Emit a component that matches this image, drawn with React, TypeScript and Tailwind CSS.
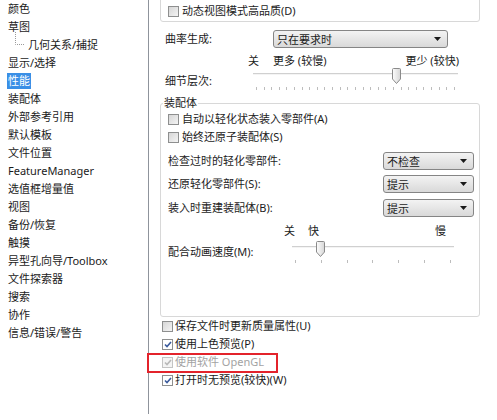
import React from 'react';

const navItems = [
  '颜色', '草图', '几何关系/捕捉', '显示/选择', '性能', '装配体', '外部参考引用', '默认模板', '文件位置',
  'FeatureManager', '选值框增量值', '视图', '备份/恢复', '触摸', '异型孔向导/Toolbox', '文件探索器', '搜索', '协作', '信息/错误/警告',
];

function Box({ checked = false, disabled = false }: { checked?: boolean; disabled?: boolean }) {
  return (
    <span className={`w-[11px] h-[11px] shrink-0 flex items-center justify-center border ${disabled ? 'border-[#c4c4c4] bg-[#f4f4f4]' : checked ? 'border-[#8e8f8f] bg-white' : 'border-[#8e8f8f] bg-gradient-to-br from-[#d6d6d6] to-[#f4f4f4]'}`}>
      {checked && (
        <svg width="8" height="7" viewBox="0 0 8 7">
          <path d="M1 3.5 L3 5.5 L7 1" fill="none" stroke={disabled ? '#b8b8b8' : '#3a5a9c'} strokeWidth="1.6" />
        </svg>
      )}
    </span>
  );
}

function Select({ value, className = '' }: { value: string; className?: string }) {
  return (
    <div className={`h-[18px] border border-[#858585] rounded-[3px] bg-gradient-to-b from-[#f3f3f3] to-[#d9d9d9] flex items-center justify-between pl-[3px] pr-[6px] ${className}`}>
      <span className="leading-none">{value}</span>
      <svg width="7" height="4" viewBox="0 0 7 4"><path d="M0 0h7L3.5 4z" fill="#1a1a1a" /></svg>
    </div>
  );
}

function Thumb() {
  return (
    <svg width="9" height="16" viewBox="0 0 9 16">
      <defs>
        <linearGradient id="tg" x1="0" y1="0" x2="1" y2="0">
          <stop offset="0" stopColor="#fdfdfd" />
          <stop offset="1" stopColor="#d6d6d6" />
        </linearGradient>
      </defs>
      <path d="M0.5 1.5 Q0.5 0.5 1.5 0.5 H7.5 Q8.5 0.5 8.5 1.5 V11 L4.5 15.5 L0.5 11 Z" fill="url(#tg)" stroke="#8a8a8a" />
    </svg>
  );
}

function Slider({ width, thumbAt, ticks }: { width: number; thumbAt: number; ticks: number }) {
  return (
    <div style={{ width }}>
      <div className="relative h-[16px]">
        <div className="absolute left-0 right-0 top-[5px] h-[2px] bg-[#d0d0d0] border-b border-[#f4f4f4]" />
        <div className="absolute top-0" style={{ left: thumbAt }}><Thumb /></div>
      </div>
      <div className="mt-[3px] h-[3px] flex justify-between px-[3px]">
        {Array.from({ length: ticks }).map((_, i) => (
          <span key={i} className="w-px h-[3px] bg-[#bdbdbd]" />
        ))}
      </div>
    </div>
  );
}

export default function App() {
  return (
    <div className="w-[497px] h-[420px] bg-white text-[11px] leading-[16px] text-[#1b1b1b] font-['Noto_Sans','Noto_Sans_CJK_SC',sans-serif] flex overflow-hidden">
      {/* left tree */}
      <div className="w-[149px] h-[414px] border-r border-[#8f949c] shrink-0">
        {navItems.map((item, i) => (
          <div key={item} className={`h-[18px] flex items-center ${i === 2 ? 'pl-[14px]' : 'pl-[7px]'}`}>
            {i === 2 && (
              <svg width="12" height="18" viewBox="0 0 12 18" className="mr-[1px] -mt-[8px]">
                <path d="M1.5 0 V12.5 H10" fill="none" stroke="#9a9a9a" strokeDasharray="1 1" />
              </svg>
            )}
            <span className={`px-[1px] ${i === 4 ? 'bg-[#3a8fe6] text-white' : ''}`}>{item}</span>
          </div>
        ))}
      </div>

      {/* right settings */}
      <div className="flex-1 flex flex-col">
        <div className="ml-[11px] w-[320px] -mt-[10px] h-[32px] border border-[#d8d8d8] rounded-[3px] pt-[10px] pl-[7px] flex items-center gap-[3px]">
          <Box />
          <span>动态视图模式高品质(D)</span>
        </div>

        <div className="mt-[8px] h-[18px] flex items-center pl-[16px]">
          <span className="w-[108px]">曲率生成:</span>
          <Select value="只在要求时" className="w-[175px]" />
        </div>

        <div className="mt-[5px] h-[15px] flex items-center pl-[99px]">
          <span>关</span>
          <span className="ml-[14px]">更多 (较慢)</span>
          <span className="ml-[79px]">更少 (较快)</span>
        </div>

        <div className="flex items-start pl-[16px]">
          <span className="w-[88px] mt-[5px]">细节层次:</span>
          <Slider width={205} thumbAt={139} ticks={27} />
        </div>

        <fieldset className="mt-[5px] ml-[11px] w-[320px] h-[222px] border border-[#d8d8d8] rounded-[3px]">
          <legend className="ml-[2px] px-[1px]">装配体</legend>
          <div className="h-[16px] flex items-center gap-[3px] pl-[7px]">
            <Box />
            <span>自动以轻化状态装入零部件(A)</span>
          </div>
          <div className="mt-[2px] h-[16px] flex items-center gap-[3px] pl-[7px]">
            <Box />
            <span>始终还原子装配体(S)</span>
          </div>
          <div className="mt-[7px] h-[18px] flex items-center pl-[7px]">
            <span className="w-[215px]">检查过时的轻化零部件:</span>
            <Select value="不检查" className="w-[91px]" />
          </div>
          <div className="mt-[5px] h-[18px] flex items-center pl-[7px]">
            <span className="w-[215px]">还原轻化零部件(S):</span>
            <Select value="提示" className="w-[91px]" />
          </div>
          <div className="mt-[6px] h-[18px] flex items-center pl-[7px]">
            <span className="w-[215px]">装入时重建装配体(B):</span>
            <Select value="提示" className="w-[91px]" />
          </div>
          <div className="mt-[6px] h-[16px] flex items-center pl-[123px]">
            <span>关</span>
            <span className="ml-[13px]">快</span>
            <span className="ml-[116px]">慢</span>
          </div>
          <div className="flex items-start pl-[7px] mt-[2px]">
            <span className="w-[124px] mt-[3px]">配合动画速度(M):</span>
            <Slider width={162} thumbAt={24} ticks={7} />
          </div>
        </fieldset>

        <div className="pl-[13px]">
          <div className="h-[18px] flex items-center gap-[2px]">
            <Box />
            <span>保存文件时更新质量属性(U)</span>
          </div>
          <div className="h-[18px] flex items-center gap-[2px]">
            <Box checked />
            <span>使用上色预览(P)</span>
          </div>
          <div className="relative h-[18px] flex items-center gap-[2px] text-[#a3a3a3]">
            <Box checked disabled />
            <span>使用软件 OpenGL</span>
            <div className="absolute -left-[15px] top-0 w-[131px] h-[20px] border-2 border-[#e3232b]" />
          </div>
          <div className="h-[18px] flex items-center gap-[2px]">
            <Box checked />
            <span>打开时无预览(较快)(W)</span>
          </div>
        </div>
      </div>
    </div>
  );
}
